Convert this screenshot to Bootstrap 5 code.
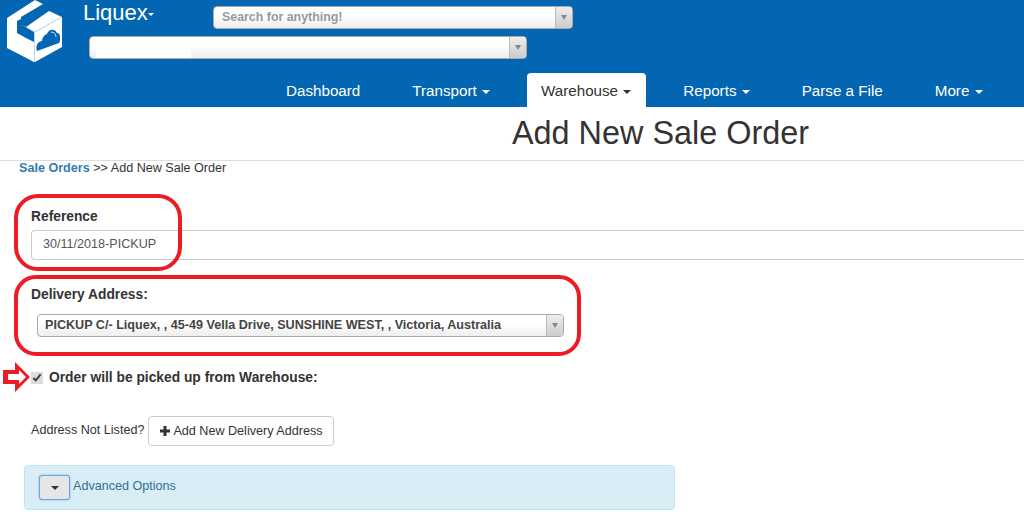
<!DOCTYPE html>
<html lang="en">
<head>
<meta charset="utf-8">
<title>Add New Sale Order</title>
<link href="https://cdn.jsdelivr.net/npm/bootstrap@5.3.0/dist/css/bootstrap.min.css" rel="stylesheet">
<style>
html,body{height:518px;overflow:hidden}
body{font-family:"Liberation Sans",Arial,sans-serif;font-size:14px;color:#333;background:#fff;position:relative}
.topbar{background:#0366b3;height:107px}
.top-part{height:73px}
.logo-slot{width:62px;height:62px;flex:none;margin-left:6px}
.brand-col{padding-left:15px}
.brand-row{height:36px}
.brand-link{color:#fff;font-size:22px;line-height:25px;text-decoration:none;width:130px;flex:none;display:block}
.caret-d{display:inline-block;width:0;height:0;border-top:4px solid currentColor;border-left:4px solid transparent;border-right:4px solid transparent;vertical-align:middle;margin-left:1px}
.brand-link .caret-d{border-top-width:3px;border-left-width:3.5px;border-right-width:3.5px;margin-left:0}
.pick-box{height:23px;border:1px solid #aaa;border-radius:4px;background:linear-gradient(#fff 40%,#eee);font-size:12.4px;font-weight:700;color:#999;line-height:21px;padding-left:8px;display:flex;justify-content:space-between}
.pick-arrow{width:17px;flex:none;border-left:1px solid #bbb;background:linear-gradient(#eee,#ccc);border-radius:0 3px 3px 0;display:flex;align-items:center;justify-content:center}
.tri{width:0;height:0;border-top:5px solid #888;border-left:3px solid transparent;border-right:3px solid transparent}
.search-box{width:360px;margin-top:6px}
.select-box{width:438px;margin-left:6px;padding-left:6px}
.blank-out{width:95px;background:#fff;height:21px;display:block}
.main-tabs{height:34px;padding-left:272px;gap:24px}
.main-tabs .nav-link{color:#fff;font-size:15.2px;line-height:20px;padding:8px 14px 6px;border-radius:4px 4px 0 0;height:34px;white-space:nowrap}
.main-tabs .nav-link.active{background:#fff;color:#333;padding-right:15px;margin-right:-1px}
.tab-tight{margin-right:-1px}
.page-head{height:54px;border-bottom:1px solid #ddd;text-align:center;padding-left:297px}
.page-head h1{font-size:32.4px;font-weight:400;line-height:52px;margin:0;color:#333}
.crumbs{font-size:12.6px;line-height:15px;padding-left:19px;height:15px}
.crumbs a{color:#337ab7;font-weight:700;text-decoration:none}
.form-zone{padding-left:31px}
.lbl{font-weight:700;font-size:13.8px;line-height:16px;margin:0;color:#333;display:block}
.ref-lbl{margin-top:33px}
.addr-lbl{margin-top:27px}
.ref-field{height:30px;border:1px solid #ccc;border-right:0;border-radius:4px 0 0 4px;margin-top:5px;padding:0 11px;line-height:27px;font-size:12.6px;color:#555}
.addr-box{width:527px;margin:11px 0 0 6px;color:#444;font-size:12.6px;padding-left:7px;line-height:21px}
.pick-row{font-size:13.8px;font-weight:700;margin-top:33px;height:16px;line-height:16px}
.pick-check{width:12px;height:12px;margin:0;flex:none;accent-color:#dcdcdc}
.pick-text{margin-left:6px}
.not-listed{font-size:12.6px;margin-top:30px;height:30px}
.not-listed-text{margin-bottom:2px}
.add-btn{font-size:12.6px;color:#333;border:1px solid #ccc;border-radius:4px;background:#fff;padding:0 10px 0 11px;height:30px;line-height:28px;margin-left:4px}
.plus-svg{vertical-align:-1px;margin-right:3px}
.adv-panel{width:651px;height:45px;margin:19px 0 0 24px;background:#d9edf7;border:1px solid #bce8f1;border-radius:4px;padding:9px 14px;color:#31708f;font-size:12.6px;line-height:20px}
.adv-btn{width:31px;height:25px;background:#e6e6e6;border:1px solid #6f9fe0;border-radius:3px;margin-right:3px;color:#333;padding:0;box-shadow:0 0 2px #66afe9}
.adv-btn .caret-d{margin:0}
.adv-text{padding-top:1px}
.redmark{position:absolute;border:4px solid #ed1c24;pointer-events:none}
.mark-ref{left:14px;top:194px;width:168px;height:77px;border-radius:24px}
.mark-addr{left:14px;top:275px;width:567px;height:81px;border-radius:22px}
.arrow-mark{position:absolute;left:3px;top:362px}
</style>
</head>
<body>
<header class="topbar d-flex flex-column">
  <div class="top-part d-flex">
    <div class="logo-slot">
      <svg width="62" height="62" viewBox="0 0 62 62" xmlns="http://www.w3.org/2000/svg">
        <polygon fill="#fff" points="1,18 29,0 37,4 15,17 15,25 20,27 20,38 28,42 28,62 1,48"/>
        <polygon fill="#fff" points="20,27 43,11 56,17 29,32"/>
        <polygon fill="#fff" points="29,32 56,17 56,47 29,62"/>
        <polygon fill="#0366b3" points="11,21 15,19 15,25 20,27 20,38 11,33"/>
        <path fill="none" stroke="#bcd8f0" stroke-width="1" d="M20 27 28.500 32 56 17M28.500 32V62"/>
        <path fill="#0366b3" d="M31 51c-1-2-1-6 1-8 1-1 2-2 4-2 0-3 2-6 5-7 1-3 4-5 6-4 2 0 3 1 4 3 2 0 3 2 3 4 0 3 0 5-1 6z"/>
        <path fill="none" stroke="#fff" stroke-width=".8" d="M45 32c3 0 5 2 5 5"/>
      </svg>
    </div>
    <div class="brand-col flex-grow-1">
      <div class="brand-row d-flex">
        <a class="brand-link" href="#">Liquex<span class="caret-d"></span></a>
        <div class="search-box pick-box">Search for anything!<span class="pick-arrow"><span class="tri"></span></span></div>
      </div>
      <div class="select-box pick-box"><span class="blank-out"></span><span class="pick-arrow"><span class="tri"></span></span></div>
    </div>
  </div>
  <ul class="nav main-tabs">
    <li class="nav-item"><a class="nav-link" href="#">Dashboard</a></li>
    <li class="nav-item tab-tight"><a class="nav-link" href="#">Transport <span class="caret-d"></span></a></li>
    <li class="nav-item"><a class="nav-link active" href="#">Warehouse <span class="caret-d"></span></a></li>
    <li class="nav-item"><a class="nav-link" href="#">Reports <span class="caret-d"></span></a></li>
    <li class="nav-item"><a class="nav-link" href="#">Parse a File</a></li>
    <li class="nav-item"><a class="nav-link" href="#">More <span class="caret-d"></span></a></li>
  </ul>
</header>
<div class="page-head"><h1>Add New Sale Order</h1></div>
<div class="crumbs"><a href="#">Sale Orders</a> &gt;&gt; Add New Sale Order</div>
<main>
  <div class="form-zone">
    <label class="lbl ref-lbl" for="refInput">Reference</label>
    <div class="ref-field" id="refInput">30/11/2018-PICKUP</div>
    <label class="lbl addr-lbl">Delivery Address:</label>
    <div class="addr-box pick-box">PICKUP C/- Liquex, , 45-49 Vella Drive, SUNSHINE WEST, , Victoria, Australia<span class="pick-arrow"><span class="tri"></span></span></div>
    <div class="pick-row d-flex align-items-center"><input class="pick-check" type="checkbox" checked><span class="pick-text">Order will be picked up from Warehouse:</span></div>
    <div class="not-listed d-flex align-items-center"><span class="not-listed-text">Address Not Listed?</span>
      <button class="add-btn" type="button"><svg class="plus-svg" width="10" height="10" viewBox="0 0 10 10"><path fill="#333" d="M3.500 0h3v3.500H10v3H6.500V10h-3V6.500H0v-3h3.500z"/></svg>Add New Delivery Address</button>
    </div>
  </div>
  <div class="adv-panel d-flex">
    <button class="adv-btn" type="button"><span class="caret-d"></span></button>
    <span class="adv-text">Advanced Options</span>
  </div>
</main>
<div class="redmark mark-ref"></div>
<div class="redmark mark-addr"></div>
<svg class="arrow-mark" width="27" height="30" viewBox="0 0 27 30"><path fill="#ed1c24" d="M0 8H12V0L27 15 12 30V22H0z"/><path fill="#fff" d="M5 12H16V8L23 15 16 22V18H5z"/></svg>
</body>
</html>
